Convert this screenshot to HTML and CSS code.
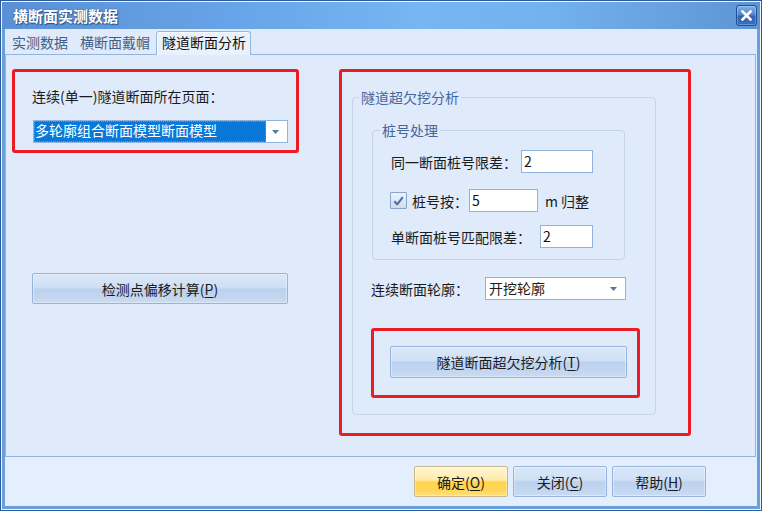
FILE: index.html
```html
<!DOCTYPE html>
<html lang="zh-CN">
<head>
<meta charset="utf-8">
<title>横断面实测数据</title>
<link rel="stylesheet" href="styles.css">
</head>
<body>
<div class="window">
  <div class="titlebar">
    <span class="title">横断面实测数据</span>
    <button class="close" aria-label="关闭">
      <svg width="11" height="11" viewBox="0 0 11 11"><path d="M1.5 1.5 L9.5 9.5 M9.5 1.5 L1.5 9.5" stroke="#fff" stroke-width="2.6" stroke-linecap="square" fill="none"/></svg>
    </button>
  </div>
  <div class="body">
    <div class="tabs">
      <div class="tab">实测数据</div>
      <div class="tab">横断面戴帽</div>
      <div class="tab active">隧道断面分析</div>
    </div>
    <div class="panel">
      <div class="left">
        <div class="mark mark-page">
          <div class="text">连续(单一)隧道断面所在页面：</div>
          <div class="combo combo-page">
            <span class="selected">多轮廓组合断面模型断面模型</span>
            <svg class="arrow" width="7" height="4" viewBox="0 0 7 4"><polygon points="0,0 7,0 3.5,4" fill="#5577a6"/></svg>
          </div>
        </div>
        <button class="btn btn-offset">检测点偏移计算(<u>P</u>)</button>
      </div>
      <div class="mark mark-right">
        <div class="group group-outer">
          <span class="legend">隧道超欠挖分析</span>
          <div class="group group-inner">
            <span class="legend">桩号处理</span>
            <div class="row row1">
              <span class="text lbl1">同一断面桩号限差：</span>
              <span class="input in1">2</span>
            </div>
            <div class="row row2">
              <span class="check">
                <svg width="16" height="16" viewBox="0 0 16 16"><path d="M3.5 8.2 L6.6 11.5 L12.6 3.8" stroke="#4f6f9f" stroke-width="2.2" fill="none" stroke-linejoin="round"/></svg>
              </span>
              <span class="text lbl2">桩号按：</span>
              <span class="input in2">5</span>
              <span class="text unit">m 归整</span>
            </div>
            <div class="row row3">
              <span class="text lbl3">单断面桩号匹配限差：</span>
              <span class="input in3">2</span>
            </div>
          </div>
          <div class="row row-contour">
            <span class="text lbl4">连续断面轮廓：</span>
            <div class="combo combo-contour">
              <span class="value">开挖轮廓</span>
              <svg class="arrow" width="7" height="4" viewBox="0 0 7 4"><polygon points="0,0 7,0 3.5,4" fill="#5577a6"/></svg>
            </div>
          </div>
          <div class="mark mark-btn">
            <button class="btn btn-analyze">隧道断面超欠挖分析(<u>T</u>)</button>
          </div>
        </div>
      </div>
    </div>
    <div class="footer">
      <button class="btn btn-ok">确定(<u>O</u>)</button>
      <button class="btn btn-foot">关闭(<u>C</u>)</button>
      <button class="btn btn-foot">帮助(<u>H</u>)</button>
    </div>
  </div>
</div>
</body>
</html>
```
FILE: styles.css
```css
* { box-sizing: border-box; }

html, body {
  margin: 0;
  padding: 0;
  background: #e3effd;
}

body {
  font-family: "Noto Sans CJK SC", "Microsoft YaHei", sans-serif;
  font-size: 14px;
  color: #1b1b1b;
}

.window {
  width: 762px;
  height: 511px;
  border: 1px solid #2d5a9a;
  padding: 1px;
  background: #eef5fd;
  display: flex;
  flex-direction: column;
}

/* ---------- title bar ---------- */
.titlebar {
  flex: none;
  height: 27px;
  display: flex;
  align-items: center;
  justify-content: space-between;
  padding: 0 3px 0 11px;
  background: linear-gradient(90deg, #5a90d5 0%, #67a3e8 30%, #76b6f4 55%, #73b1ef 72%, #68a1df 88%, #5c94d4 100%);
}

.title {
  color: #ffffff;
  font-weight: bold;
  font-size: 15px;
  line-height: 20px;
  text-shadow: 1px 1px 1px #2b4f85, 0 0 2px #3b64a0;
}

.close {
  width: 21px;
  height: 21px;
  padding: 0;
  margin: 0;
  border: 1px solid #234f90;
  border-radius: 3px;
  background: linear-gradient(180deg, #7eb0ec 0%, #4f86d2 45%, #2f63b4 55%, #3a70c0 100%);
  display: flex;
  align-items: center;
  justify-content: center;
  box-shadow: inset 0 0 0 1px rgba(255,255,255,0.25);
}

/* ---------- body ---------- */
.body {
  flex: 1;
  display: flex;
  flex-direction: column;
  border: 3px solid #6b9fdb;
  border-top: 0;
  background: #e3effd;
}

.tabs {
  flex: none;
  height: 25px;
  display: flex;
  align-items: flex-end;
  padding-left: 1px;
  background: #dfeafa;
}

.tab {
  height: 23px;
  line-height: 21px;
  padding: 0 5px;
  border: 1px solid transparent;
  border-bottom: 0;
  color: #3f5f8b;
  white-space: nowrap;
}

.tab.active {
  position: relative;
  z-index: 1;
  height: 24px;
  margin-bottom: -1px;
  padding: 0 4px 0 5px;
  color: #111;
  background: #e9f1fc;
  border-color: #97b6df;
  border-radius: 3px 3px 0 0;
  box-shadow: inset 1px 1px 0 #f7fbff;
}

.panel {
  flex: none;
  height: 403px;
  margin-right: 1px;
  border: 1px solid #93b4e0;
  background: #dfeafa;
  display: flex;
  align-items: flex-start;
  padding: 14px 0 0 6px;
}

/* ---------- annotation marks ---------- */
.mark {
  border: 3px solid #ec1c24;
  border-radius: 3px;
}

.text {
  line-height: 20px;
  white-space: nowrap;
}

/* ---------- left column ---------- */
.left {
  flex: none;
  width: 287px;
  display: flex;
  flex-direction: column;
  align-items: flex-start;
}

.mark-page {
  width: 287px;
  height: 84px;
  padding: 14px 0 0 17px;
}

.combo {
  height: 23px;
  border: 1px solid #8fb2df;
  background: #ffffff;
  display: flex;
  align-items: center;
  justify-content: space-between;
  padding: 0 8px 0 0;
}

.combo-page {
  width: 255px;
  margin: 14px 0 0 1px;
  padding-left: 0;
}

.combo-page .selected {
  width: 232px;
  height: 21px;
  line-height: 19px;
  background: #0a78d8;
  color: #ffffff;
  padding: 0 1px;
  outline: 1px dotted #c98b2a;
  outline-offset: -1px;
  white-space: nowrap;
  overflow: hidden;
}

.arrow { flex: none; }

/* ---------- buttons ---------- */
.btn {
  font-family: inherit;
  font-size: 14px;
  color: #1b1b1b;
  line-height: 20px;
  padding: 0;
  border: 1px solid #98b4dc;
  border-radius: 2px;
  background: linear-gradient(180deg, #dbe7f8 0%, #cfe0f5 45%, #bcd1ee 52%, #c2d6f0 80%, #cbdcf3 100%);
  box-shadow: inset 0 0 0 1px rgba(255,255,255,0.35);
}

.btn u { text-underline-offset: 2px; }

.btn-offset {
  width: 256px;
  height: 31px;
  margin: 120px 0 0 20px;
}

/* ---------- right column ---------- */
.mark-right {
  flex: none;
  width: 352px;
  height: 367px;
  margin-left: 40px;
  padding: 25px 0 0 10px;
}

.group {
  border: 1px solid #c3d4ea;
  border-radius: 4px;
  display: flex;
  flex-direction: column;
  align-items: flex-start;
}

.legend {
  display: block;
  margin: -11px 0 0 6px;
  padding: 0 2px;
  line-height: 20px;
  background: #dfeafa;
  color: #44679b;
  white-space: nowrap;
}

.group-outer {
  width: 304px;
  height: 318px;
}

.group-inner {
  width: 253px;
  height: 130px;
  margin: 23px 0 0 19px;
}

.group-inner .legend { margin-left: 7px; }

.row {
  display: flex;
  align-items: center;
}

.input {
  display: block;
  height: 23px;
  line-height: 21px;
  border: 1px solid #8fb2df;
  background: #ffffff;
  padding: 0 2px;
  color: #111;
}

.row1 { margin: 10px 0 0 18px; }
.lbl1 { width: 130px; }
.in1 { width: 72px; }

.row2 { margin: 16px 0 0 17px; }
.check {
  width: 17px;
  height: 17px;
  border: 1px solid #8aa5cc;
  border-radius: 1px;
  background: linear-gradient(180deg, #eef3fa 0%, #cfdcee 100%);
  display: flex;
  align-items: center;
  justify-content: center;
}
.check svg { display: block; }
.lbl2 { width: 57px; margin-left: 5px; }
.in2 { width: 69px; }
.unit { margin-left: 7px; }

.row3 { margin: 13px 0 0 18px; }
.lbl3 { width: 149px; }
.in3 { width: 53px; }

.row-contour { margin: 17px 0 0 18px; }
.lbl4 { width: 114px; }

.combo-contour {
  width: 141px;
  padding-left: 3px;
}
.combo-contour .value { line-height: 21px; }

.mark-btn {
  width: 269px;
  height: 70px;
  margin: 28px 0 0 18px;
  padding: 15px 0 0 16px;
}

.btn-analyze {
  width: 237px;
  height: 32px;
}

/* ---------- footer ---------- */
.footer {
  flex: 1;
  display: flex;
  justify-content: flex-end;
  align-items: flex-start;
  gap: 5px;
  padding: 9px 51px 0 0;
  background: #e3effd;
}

.btn-foot, .btn-ok {
  width: 94px;
  height: 31px;
}

.btn-ok {
  border-color: #c8b68c;
  background: linear-gradient(180deg, #fff6d6 0%, #ffeaa8 45%, #ffd54e 52%, #ffd65a 80%, #ffe07e 100%);
}
```
